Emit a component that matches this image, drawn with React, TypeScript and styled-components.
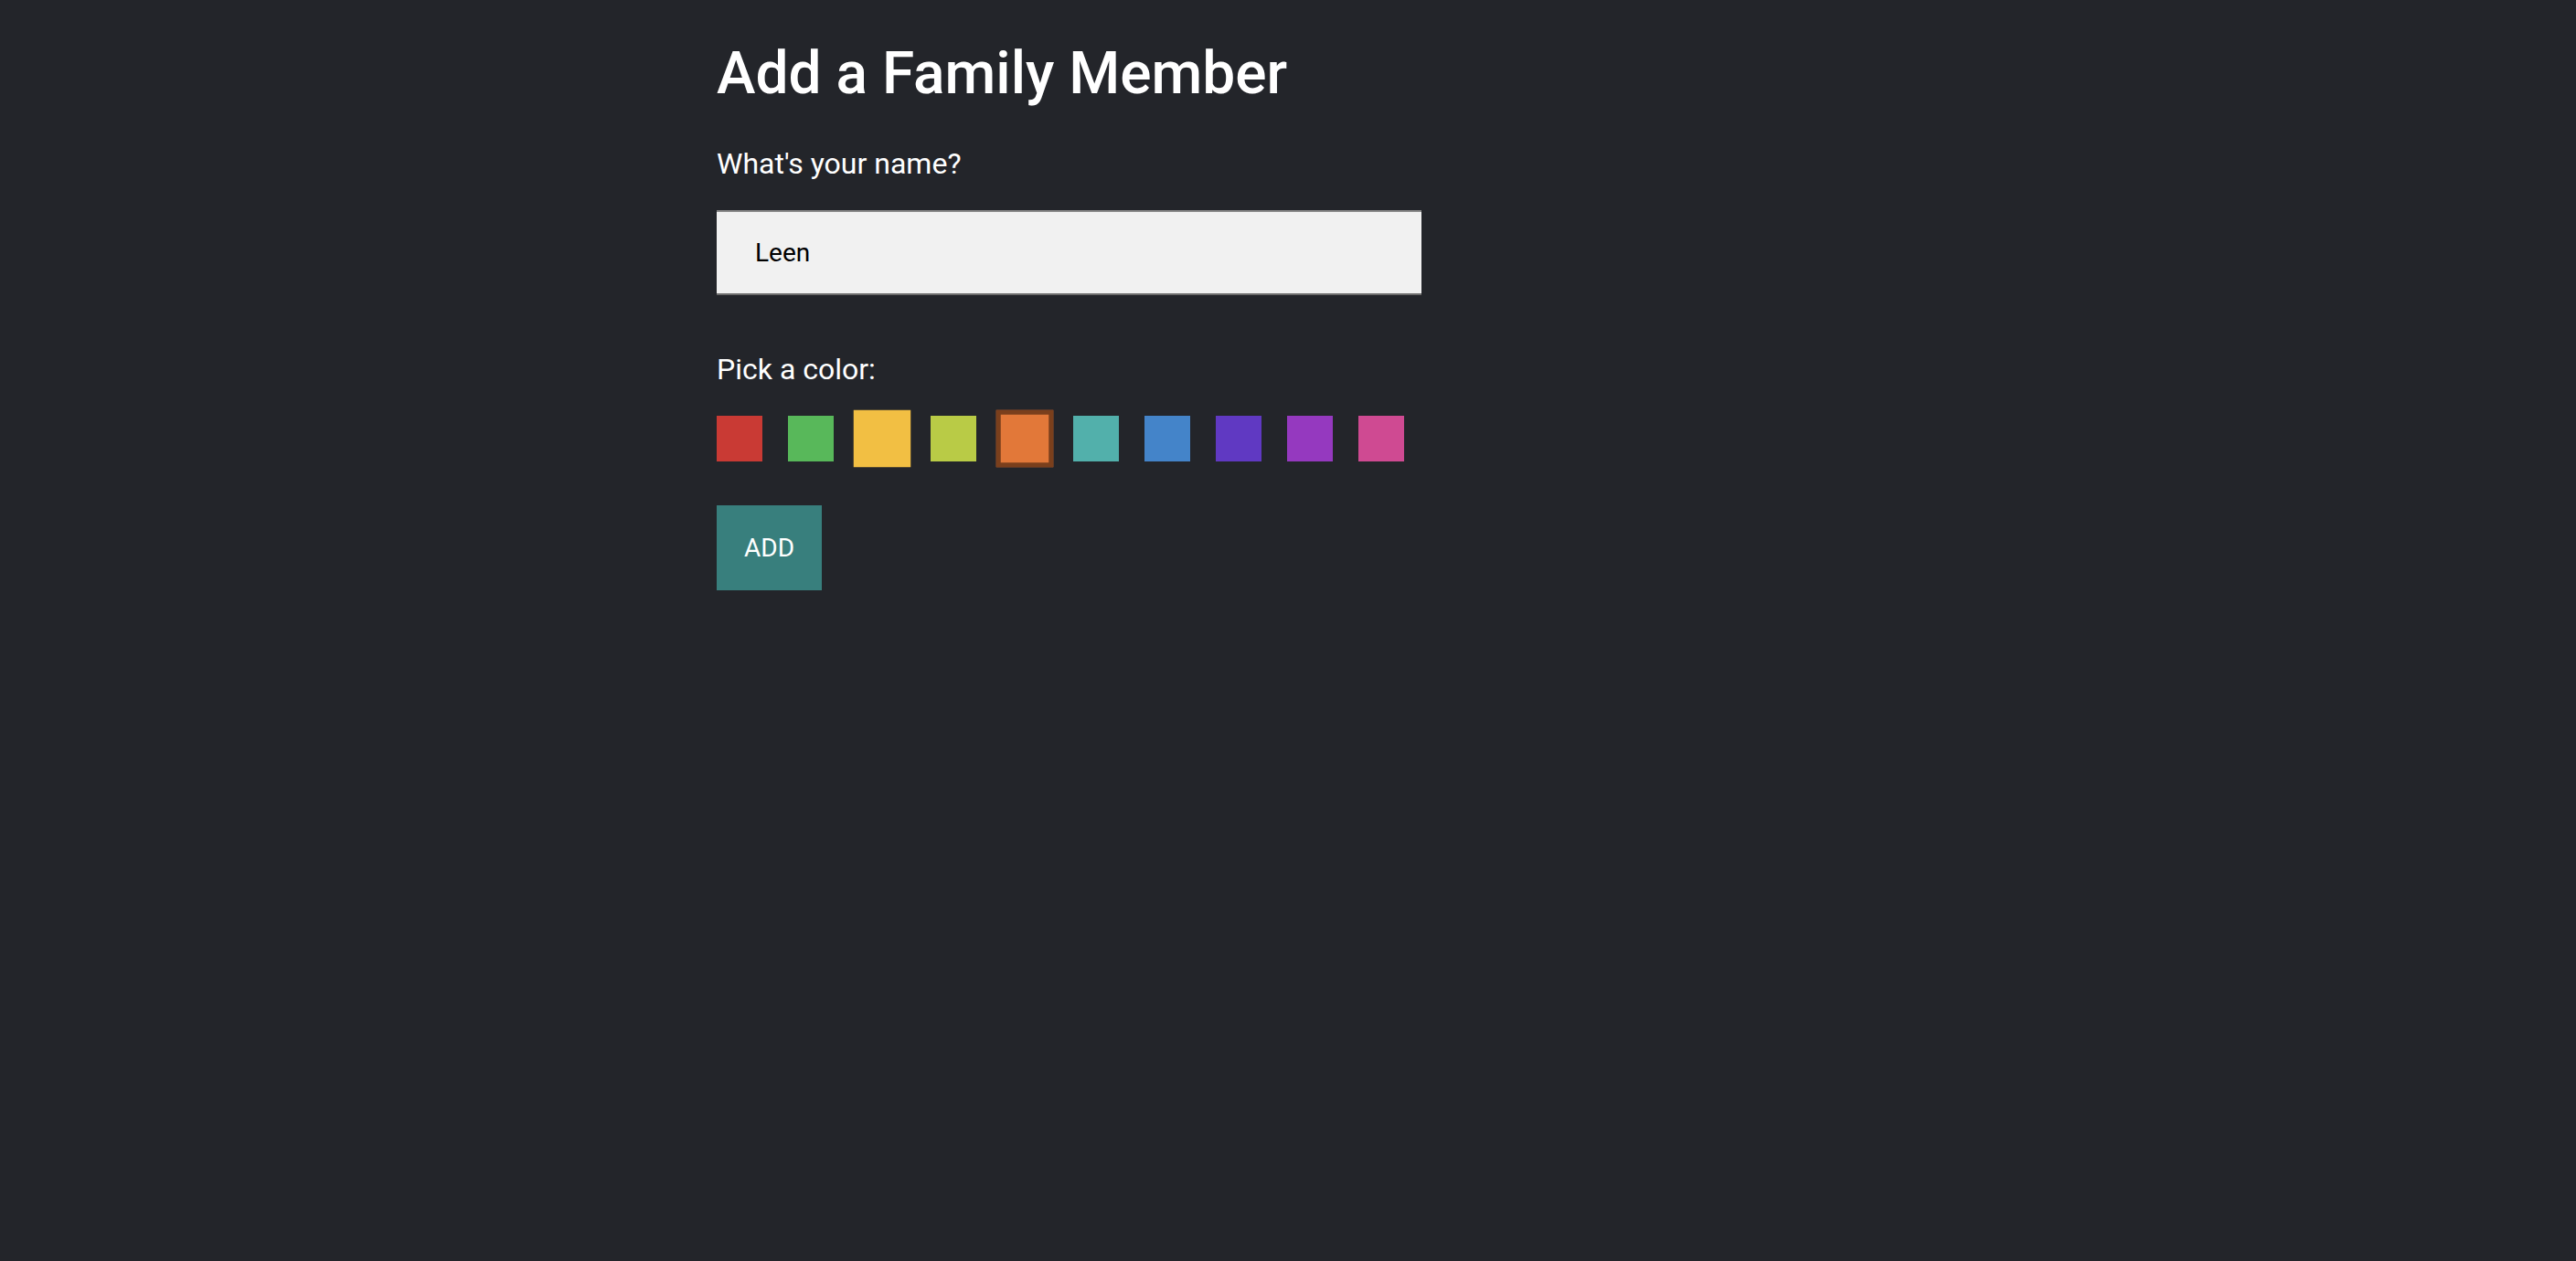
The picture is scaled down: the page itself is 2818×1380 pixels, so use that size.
import React, { useState } from "react";
import styled, { createGlobalStyle } from "styled-components";

const GlobalStyle = createGlobalStyle`
  html, body {
    margin: 0;
    padding: 0;
    background: #23252a;
  }
  body {
    font-family: Roboto, "Liberation Sans", sans-serif;
    color: #ffffff;
    min-height: 1380px;
  }
`;

const Page = styled.main`
  width: 1250px;
  margin: 0 auto;
  padding-top: 43px;
  display: flex;
  flex-direction: column;
  align-items: flex-start;
`;

const Title = styled.h1`
  margin: 0;
  font-size: 64px;
  line-height: 75px;
  font-weight: 500;
  color: #ffffff;
`;

const Label = styled.label<{ $gap: number }>`
  display: block;
  margin-top: ${(p) => p.$gap}px;
  font-size: 32px;
  line-height: 37px;
  font-weight: 400;
  color: #ffffff;
`;

const NameInput = styled.input`
  box-sizing: border-box;
  margin-top: 32px;
  width: 771px;
  height: 93px;
  padding: 0 42px;
  border: none;
  border-top: 2px solid #8a8a8a;
  border-bottom: 2px solid #6b6b6b;
  background: #f1f1f1;
  font-family: Roboto, "Liberation Sans", sans-serif;
  font-size: 28px;
  color: #000000;
  outline: none;
`;

const SwatchRow = styled.div`
  margin-top: 32px;
  display: flex;
  gap: 28px;
`;

const Swatch = styled.button<{ $color: string; $edge: string; $selected: boolean; $big: boolean }>`
  box-sizing: border-box;
  width: 50px;
  height: 50px;
  padding: 0;
  background: ${(p) => p.$color};
  border: ${(p) => (p.$selected ? `4px solid ${p.$edge}` : "none")};
  transform: ${(p) => (p.$big ? "scale(1.25)" : "none")};
  cursor: pointer;
`;

const AddButton = styled.button`
  box-sizing: border-box;
  margin-top: 48px;
  height: 93px;
  padding: 0 30px;
  border: none;
  background: #387f7d;
  color: #ffffff;
  font-family: Roboto, "Liberation Sans", sans-serif;
  font-size: 28px;
  cursor: pointer;
`;

const colors = [
  { c: "#c93a34", e: "#6e1f1b" },
  { c: "#58b85a", e: "#2f6a31" },
  { c: "#f2bf43", e: "#8a6a1f" },
  { c: "#b9cb46", e: "#66711f" },
  { c: "#e27839", e: "#7a3f1c" },
  { c: "#52b0ab", e: "#2a615e" },
  { c: "#4484c9", e: "#234a72" },
  { c: "#6039c2", e: "#33206b" },
  { c: "#9539bf", e: "#521f6b" },
  { c: "#cf4a92", e: "#752850" },
];

export default function App() {
  const [name, setName] = useState("Leen");
  const [selected, setSelected] = useState(4);
  const hovered = 2;
  return (
    <>
      <GlobalStyle />
      <Page>
        <Title>Add a Family Member</Title>
        <Label $gap={43} htmlFor="name">What's your name?</Label>
        <NameInput id="name" value={name} onChange={(e) => setName(e.target.value)} />
        <Label $gap={63}>Pick a color:</Label>
        <SwatchRow>
          {colors.map((col, i) => (
            <Swatch
              key={col.c}
              $color={col.c}
              $edge={col.e}
              $selected={i === selected}
              $big={i === selected || i === hovered}
              onClick={() => setSelected(i)}
              aria-label={`color ${i + 1}`}
            />
          ))}
        </SwatchRow>
        <AddButton>ADD</AddButton>
      </Page>
    </>
  );
}
